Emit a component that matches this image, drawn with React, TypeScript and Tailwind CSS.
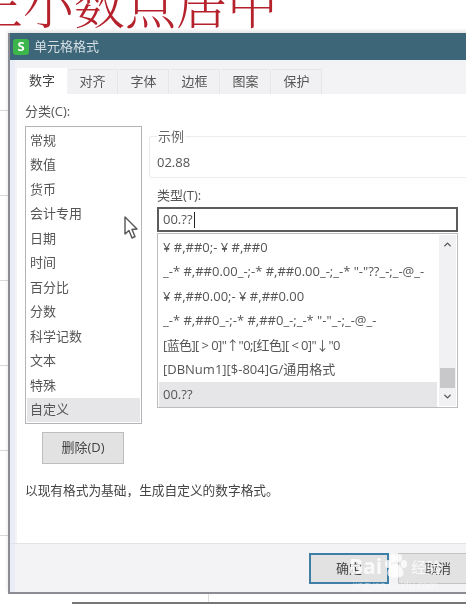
import { ChevronDown, ChevronUp } from 'lucide-react';

const font = 'font-["Open_Sans","Noto_Sans_CJK_SC",sans-serif]';

const tabs = ['数字', '对齐', '字体', '边框', '图案', '保护'];
const categories = ['常规', '数值', '货币', '会计专用', '日期', '时间', '百分比', '分数', '科学记数', '文本', '特殊', '自定义'];
const formats = [
  '¥ #,##0;- ¥ #,##0',
  '_-* #,##0.00_-;-* #,##0.00_-;_-* "-"??_-;_-@_-',
  '¥ #,##0.00;- ¥ #,##0.00',
  '_-* #,##0_-;-* #,##0_-;_-* "-"_-;_-@_-',
  '[蓝色][ > 0]"↑"0;[红色][ < 0]"↓"0',
  '[DBNum1][$-804]G/通用格式',
  '00.??',
];

function Cursor() {
  return (
    <svg className="absolute left-[106px] top-[122px]" width="16" height="25" viewBox="0 0 16 25">
      <path d="M2 1 L2 18 L6 14.5 L9 22 L12 20.5 L9 13.5 L14 13 Z" fill="#fff" stroke="#555" strokeWidth="1.4" strokeLinejoin="round" />
    </svg>
  );
}

function Watermark() {
  return (
    <div className="absolute left-[349px] top-[553px] flex flex-col items-center text-white/80">
      <div className="flex items-end">
        <span className="text-[21px] font-bold leading-[26px]">Bai</span>
        <svg width="26" height="26" viewBox="0 0 26 26" fill="currentColor">
          <ellipse cx="6" cy="11" rx="3" ry="4" />
          <ellipse cx="11" cy="5" rx="3" ry="4" />
          <ellipse cx="17" cy="5" rx="3" ry="4" />
          <ellipse cx="22" cy="11" rx="3" ry="4" />
          <path d="M13.5 11c4 0 8 5 8 9s-4 4.500-8 4.500-8 0-8-4.500 4-9 8-9z" />
        </svg>
        <span className="ml-[3px] text-[15px] leading-[24px]">经验</span>
      </div>
      <span className="text-[10px] leading-[12px] text-white/50">jingyan.baidu.com</span>
    </div>
  );
}

export default function App() {
  return (
    <div className={`relative h-[605px] w-[466px] overflow-hidden bg-white bg-[linear-gradient(#d9d9dc_1px,transparent_1px)] bg-[size:100%_85px] bg-[position:0_25px] blur-[0.5px] ${font}`}>
      <div className="h-[33px] overflow-hidden bg-white">
        <div className='-mt-[28px] -ml-[28px] whitespace-nowrap text-[51px] leading-[60px] font-light text-[#b5222c] font-["Noto_Serif_CJK_SC","Noto_Sans_CJK_SC",serif]'>
          正小数点居中
        </div>
      </div>

      <div className="ml-[8px] flex h-[561px] w-[470px] flex-col border-b-2 border-l-2 border-[#8c8c94] bg-[#f3f3f6] shadow-[0_-2px_4px_rgba(0,0,0,0.12),inset_5px_0_0_#e9edf6]">
        <div className="flex h-[27px] shrink-0 items-center bg-[#3d6679] pl-[3px]">
          <div className="flex h-[16px] w-[16px] items-center justify-center rounded-[3px] bg-[#3cb54a] text-[13px] leading-none font-bold text-white">
            S
          </div>
          <span className="ml-[5px] text-[13px] text-[#d5dfe4]">单元格格式</span>
        </div>

        <div className="flex h-[34px] shrink-0 items-end pl-[7px]">
          {tabs.map((tab, i) => (
            <div
              key={tab}
              className={
                i === 0
                  ? 'flex h-[26px] w-[50px] items-center justify-center bg-white text-[13px] text-[#444]'
                  : 'ml-[1px] flex h-[25px] w-[50px] items-center justify-center border-t border-r border-[#e6e6e8] bg-[#f1f1f3] text-[13px] text-[#555]'
              }
            >
              {tab}
            </div>
          ))}
        </div>

        <div className="relative mr-[-10px] ml-[7px] h-[449px] shrink-0 bg-white">
          <div className="flex">
            <div className="ml-[8px] w-[117px] shrink-0">
              <div className="h-[32px] pt-[8px] text-[13px] leading-[18px] text-[#555]">分类(C):</div>
              <div className="h-[298px] border border-[#b4b4b8] p-[1px]">
                {categories.map((c, i) => (
                  <div
                    key={c}
                    className={`flex h-[24.500px] items-center pl-[3px] text-[13px] text-[#555] ${i === 11 ? 'bg-[#e6e6e8]' : ''}`}
                  >
                    {c}
                  </div>
                ))}
              </div>
              <button
                type="button"
                className="mt-[8px] ml-[17px] flex h-[32px] w-[82px] items-center justify-center border border-[#bdbdbd] bg-[#e2e2e2] text-[13px] text-[#444]"
              >
                删除(D)
              </button>
            </div>

            <div className="ml-[7px] flex-1 pt-[35px]">
              <fieldset className="h-[49px] rounded-[2px] border border-[#ececee] px-[7px]">
                <legend className="px-[1px] text-[13px] leading-[14px] text-[#666]">示例</legend>
                <div className="pt-[10px] text-[13px] leading-[18px] text-[#555]">02.88</div>
              </fieldset>

              <div className="ml-[8px] w-[301px]">
                <div className="mt-[8px] text-[13px] leading-[18px] text-[#555]">类型(T):</div>
                <div className="mt-[3px] flex h-[25px] items-center border-2 border-[#5c5c5c] pl-[4px] text-[13px] text-[#555]">
                  00.??
                  <span className="ml-[1px] h-[16px] w-[1px] bg-[#222]" />
                </div>
                <div className="mt-[1px] flex h-[175px] border border-[#bcbcc0] p-[1px]">
                  <div className="flex-1">
                    {formats.map((f, i) => (
                      <div
                        key={f}
                        className={`flex h-[24.500px] items-center pl-[4px] text-[13px] whitespace-nowrap text-[#555] ${i === 6 ? 'bg-[#e6e6e8]' : ''} ${i === 4 ? 'tracking-[-0.6px]' : ''}`}
                      >
                        {f}
                      </div>
                    ))}
                  </div>
                  <div className="ml-[2px] flex w-[17px] shrink-0 flex-col items-center bg-[#f1f1f3] text-[#555]">
                    <ChevronUp className="mt-[4px]" size={11} strokeWidth={3} />
                    <div className="mt-[118px] h-[20px] w-[15px] bg-[#c8c8ca]" />
                    <ChevronDown className="mt-[3px]" size={11} strokeWidth={3} />
                  </div>
                </div>
              </div>
            </div>
          </div>

          <div className="mt-[17px] ml-[8px] text-[12.700px] leading-[18px] text-[#444]">以现有格式为基础，生成自定义的数字格式。</div>
          <Cursor />
        </div>

        <div className="flex flex-1 items-start border-t border-[#e3e3e6] pt-[9px] pl-[299px]">
          <button
            type="button"
            className="flex h-[31px] w-[82px] items-center justify-center border-[2px] border-[#3f7fa6] bg-[#e2e2e2] text-[13px] text-[#444]"
          >
            确定
          </button>
          <button
            type="button"
            className="ml-[9px] flex h-[31px] w-[82px] items-center justify-center border border-[#c4c4c4] bg-[#e2e2e2] text-[13px] text-[#444]"
          >
            取消
          </button>
        </div>
      </div>

      <div className="ml-[72px] h-[10px] border-b-2 border-[#777]">
        <div className="ml-[136px] h-full w-px bg-[#dcdcdc]" />
      </div>
      <Watermark />
    </div>
  );
}
